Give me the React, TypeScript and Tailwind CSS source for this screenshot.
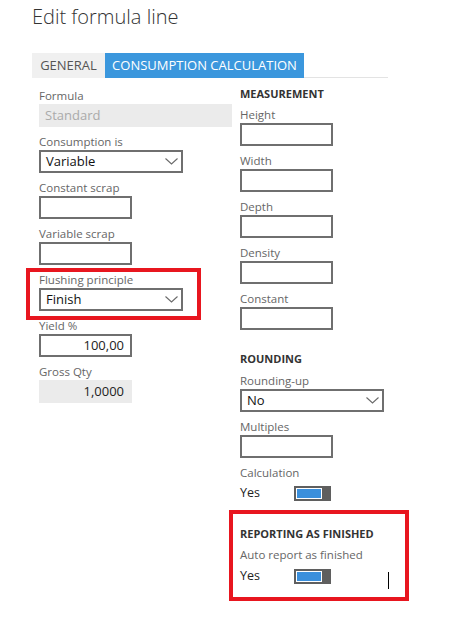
import React from 'react'

const font = { fontFamily: '"Segoe UI", "Open Sans", sans-serif' }

const labelClass = 'h-4 text-[11.5px] leading-4 text-[#666]'
const inputClass = 'h-[23px] border-2 border-[#6f6f6f] bg-white'

const Chevron = () => (
  <svg width="13" height="7" viewBox="0 0 13 7" className="shrink-0">
    <path d="M0.5 0.5 L6.5 6 L12.5 0.5" fill="none" stroke="#6a6a6a" strokeWidth="1.1" />
  </svg>
)

const Field = ({ label, children }: { label: string; children: React.ReactNode }) => (
  <div className="flex flex-col">
    <div className={labelClass}>{label}</div>
    {children}
  </div>
)

const TextBox = ({ value = '', wide = false }: { value?: string; wide?: boolean }) => (
  <div
    className={`${inputClass} ${wide ? 'w-[144px]' : 'w-[93px]'} flex items-center justify-end pr-[6px] text-[13px] text-[#222]`}
  >
    {value}
  </div>
)

const Select = ({ value }: { value: string }) => (
  <div className={`${inputClass} w-[144px] flex items-center justify-between pl-[5px] pr-[3px] text-[13px] text-[#111]`}>
    <span className="leading-none">{value}</span>
    <Chevron />
  </div>
)

const Toggle = () => (
  <div className="flex h-[15px] w-[37px] bg-[#5f5f5f] p-[2px]">
    <div className="h-full w-[26px] bg-white p-[1px]">
      <div className="h-full w-full bg-[#3a8fdc]" />
    </div>
  </div>
)

const YesRow = () => (
  <div className="flex h-4 items-center">
    <span className="w-[54px] text-[12.5px] leading-4 text-[#222]">Yes</span>
    <Toggle />
  </div>
)

const Heading = ({ children }: { children: React.ReactNode }) => (
  <div className="h-4 text-[11px] font-bold leading-4 text-[#333]">{children}</div>
)

export default function App() {
  return (
    <div className="h-[622px] w-[451px] bg-white" style={font}>
      <div className="pl-[32px] pt-[2px]">
        <h1 className="h-[30px] text-[20px] font-light leading-[30px] text-[#333]">Edit formula line</h1>

        <div className="mt-[21px] flex w-[356px]">
          <div className="flex h-[25px] w-[73px] items-center justify-center bg-[#f0f0f0] text-[13px] text-[#555]">
            GENERAL
          </div>
          <div className="flex h-[25px] w-[199px] items-center justify-center bg-[#3b97dd] text-[13px] text-white">
            CONSUMPTION CALCULATION
          </div>
          <div className="flex-1 border-b border-[#e3e3e3]" />
        </div>

        <div className="mt-[8px] flex pl-[7px]">
          {/* left column */}
          <div className="flex w-[201px] flex-col gap-[7px] pt-[2px]">
            <Field label="Formula">
              <div className="flex h-[23px] w-[193px] items-center bg-[#ebebeb] pl-[6px] text-[13px] text-[#aaa]">
                Standard
              </div>
            </Field>
            <Field label="Consumption is">
              <Select value="Variable" />
            </Field>
            <Field label="Constant scrap">
              <TextBox />
            </Field>
            <Field label="Variable scrap">
              <TextBox />
            </Field>
            <div className="relative">
              <Field label="Flushing principle">
                <Select value="Finish" />
              </Field>
              <div className="pointer-events-none absolute -left-[13px] -top-[4px] h-[52px] w-[175px] border-4 border-[#e8161f]" />
            </div>
            <Field label="Yield %">
              <TextBox value="100,00" />
            </Field>
            <Field label="Gross Qty">
              <div className="flex h-[23px] w-[93px] items-center justify-end bg-[#ebebeb] pr-[8px] text-[13px] text-[#222]">
                1,0000
              </div>
            </Field>
          </div>

          {/* right column */}
          <div className="flex w-[170px] flex-col">
            <Heading>MEASUREMENT</Heading>
            <div className="mt-[5px] flex flex-col gap-[7px]">
              <Field label="Height">
                <TextBox />
              </Field>
              <Field label="Width">
                <TextBox />
              </Field>
              <Field label="Depth">
                <TextBox />
              </Field>
              <Field label="Density">
                <TextBox />
              </Field>
              <Field label="Constant">
                <TextBox />
              </Field>
            </div>

            <div className="mt-[21px]">
              <Heading>ROUNDING</Heading>
            </div>
            <div className="mt-[6px] flex flex-col gap-[7px]">
              <Field label="Rounding-up">
                <Select value="No" />
              </Field>
              <Field label="Multiples">
                <TextBox />
              </Field>
              <div className="flex flex-col">
                <div className={labelClass}>Calculation</div>
                <div className="mt-[4px]">
                  <YesRow />
                </div>
              </div>
            </div>

            <div className="relative mt-[25px]">
              <Heading>REPORTING AS FINISHED</Heading>
              <div className={`${labelClass} mt-[5px]`}>Auto report as finished</div>
              <div className="mt-[5px]">
                <YesRow />
              </div>
              <div className="pointer-events-none absolute -left-[11px] -top-[16px] h-[91px] w-[180px] border-4 border-[#e8161f]" />
              <div className="absolute left-[148px] top-[46px] h-[17px] w-px bg-black" />
            </div>
          </div>
        </div>
      </div>
    </div>
  )
}
